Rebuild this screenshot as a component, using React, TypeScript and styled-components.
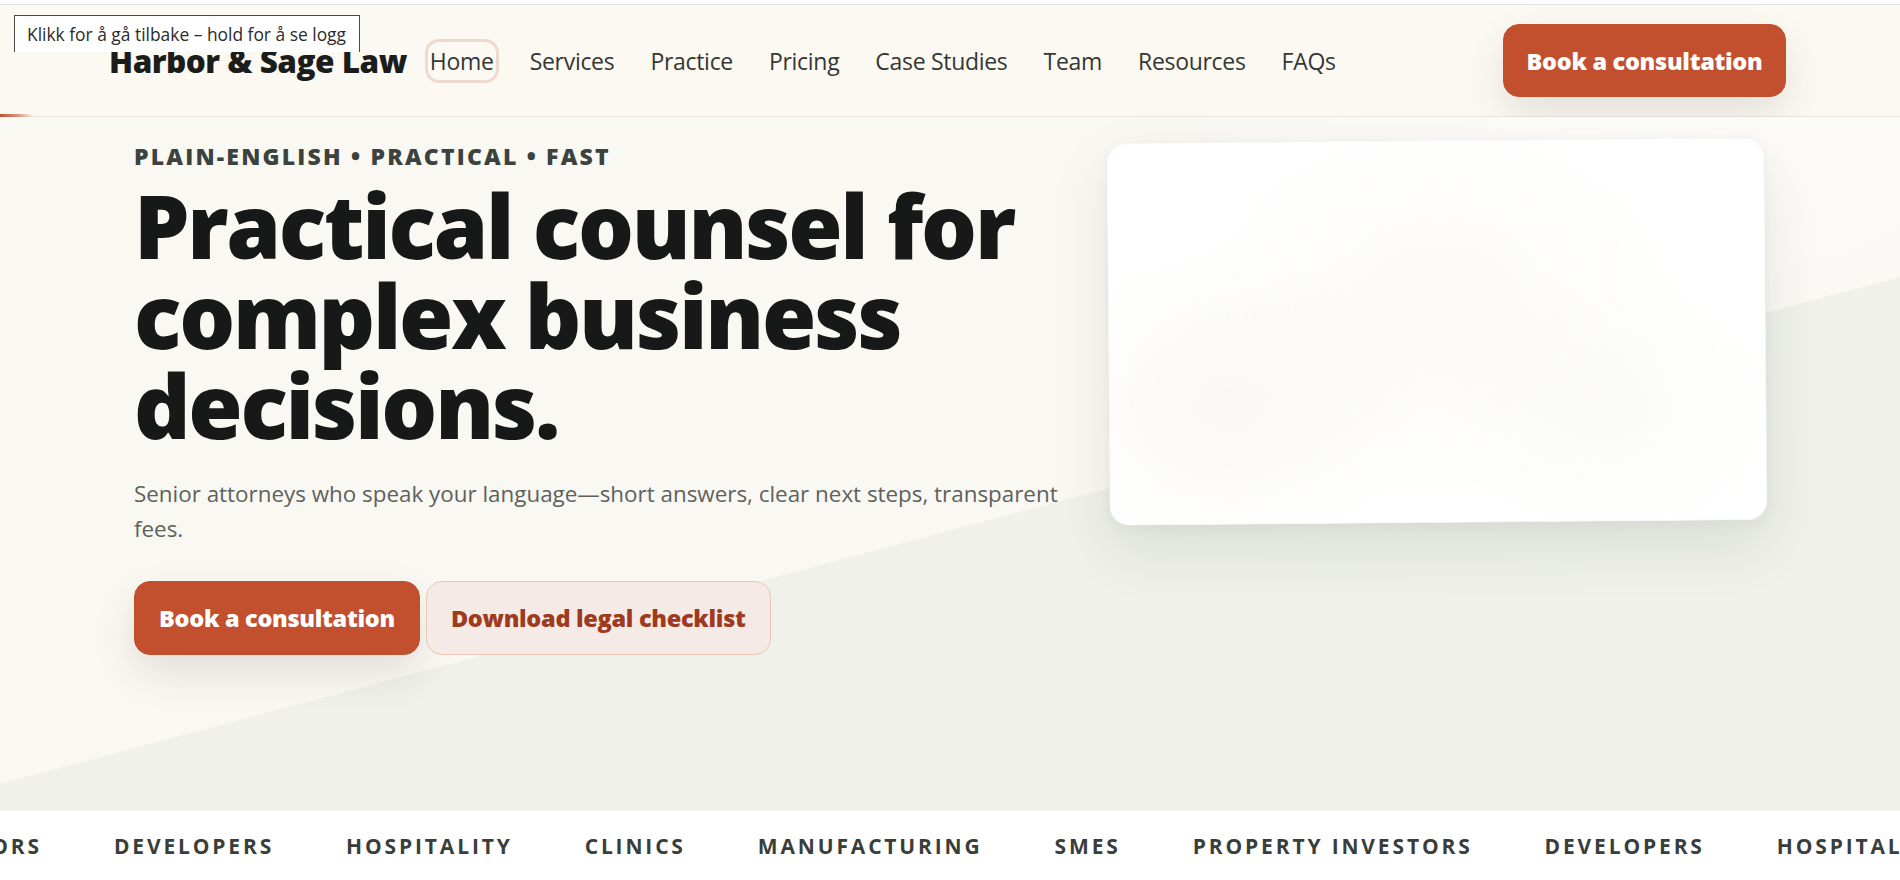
import React from 'react';
import styled, { createGlobalStyle } from 'styled-components';

const GlobalStyle = createGlobalStyle`
  * { box-sizing: border-box; }
  body {
    margin: 0;
    background: #ffffff;
    font-family: "Open Sans", "Noto Sans", Arial, sans-serif;
    color: #1b1d1b;
  }
`;

const colors = {
  brand: '#c2502e',
  brandText: '#9e3a20',
  ink: '#161917',
  muted: '#5d625d',
  cream: '#faf8f3',
  sage: '#eff1ea',
};

const TopRule = styled.div`
  height: 5px;
  background: #ffffff;
  border-bottom: 1px solid #e2e2e2;
`;

const Header = styled.header`
  position: relative;
  display: flex;
  align-items: center;
  height: 112px;
  padding: 0 114px 0 109px;
  background: #fcf9f3;
  border-bottom: 1px solid #ebe7e0;
`;

const ScrollProgress = styled.div`
  position: absolute;
  left: 0;
  bottom: -1px;
  width: 34px;
  height: 3px;
  background: linear-gradient(90deg, ${colors.brand} 0%, rgba(194, 80, 46, 0.55) 55%, rgba(194, 80, 46, 0) 100%);
`;

const Logo = styled.a`
  font-size: 31.5px;
  font-weight: 800;
  letter-spacing: -0.5px;
  color: #1b1d1b;
  text-decoration: none;
  white-space: nowrap;
`;

const Nav = styled.nav`
  display: flex;
  align-items: center;
  gap: 26px;
  margin-left: 18px;
`;

const NavLink = styled.a<{ $active?: boolean }>`
  padding: 4px 2px;
  border: 3px solid ${p => (p.$active ? '#f0d9cf' : 'transparent')};
  border-radius: 14px;
  font-size: 23px;
  line-height: 30px;
  letter-spacing: -0.3px;
  color: #343734;
  text-decoration: none;
  white-space: nowrap;
`;

const Button = styled.a<{ $variant?: 'primary' | 'soft' }>`
  display: inline-flex;
  align-items: center;
  justify-content: center;
  height: 74px;
  padding: 0 24px;
  border-radius: 16px;
  font-size: 23.5px;
  font-weight: 800;
  letter-spacing: -0.3px;
  text-decoration: none;
  white-space: nowrap;

  ${p => p.$variant === 'soft' ? `
    background: #f6eae6;
    color: ${colors.brandText};
    border: 1px solid #ebc6b9;
  ` : `
    background: ${colors.brand};
    color: #ffffff;
    border: 1px solid ${colors.brand};
    box-shadow: 0 18px 40px rgba(60, 50, 40, 0.12);
  `}
`;

const HeaderCta = styled(Button)`
  margin-left: auto;
  height: 73px;
  width: 283px;
`;

const Tooltip = styled.div`
  position: absolute;
  top: 10px;
  left: 14px;
  width: 346px;
  height: 37px;
  padding: 0 12px;
  display: flex;
  align-items: center;
  background: #ffffff;
  border: 1px solid #4a4a4a;
  border-bottom: none;
  font-size: 17.4px;
  color: #2b2b2b;
  white-space: nowrap;
  z-index: 10;
`;

const Hero = styled.section`
  position: relative;
  height: 694px;
  overflow: hidden;
  background:
    radial-gradient(ellipse 500px 260px at 1650px 0px, rgba(255, 255, 255, 0.6), rgba(255, 255, 255, 0)),
    ${colors.cream};

  &::before {
    content: '';
    position: absolute;
    inset: 0;
    background: ${colors.sage};
    clip-path: polygon(0 667px, 100% 160px, 100% 100%, 0 100%);
  }
`;

const HeroInner = styled.div`
  position: relative;
  z-index: 1;
  width: 1632px;
  margin: 0 auto;
  padding-top: 23px;
  display: grid;
  grid-template-columns: 1fr 658px;
  gap: 40px;
  align-items: start;
`;

const Copy = styled.div`
  display: flex;
  flex-direction: column;
  align-items: flex-start;
`;

const Eyebrow = styled.p`
  margin: 0;
  font-size: 23px;
  line-height: 32px;
  font-weight: 800;
  letter-spacing: 2.2px;
  color: #3c423d;
  text-transform: uppercase;
`;

const Title = styled.h1`
  margin: 8px 0 0;
  font-size: 88px;
  line-height: 90px;
  font-weight: 800;
  letter-spacing: -2.3px;
  color: ${colors.ink};
`;

const Lede = styled.p`
  margin: 26px 0 0;
  font-size: 22.4px;
  line-height: 35px;
  color: ${colors.muted};
  max-width: 934px;
`;

const Actions = styled.div`
  display: flex;
  gap: 6px;
  margin-top: 35px;
`;

const HeroCard = styled.div`
  height: 383px;
  border-radius: 20px;
  border: 1px solid rgba(0, 0, 0, 0.04);
  background:
    radial-gradient(ellipse 260px 200px at 330px 170px, rgba(250, 249, 245, 0.9), rgba(255, 255, 255, 0)),
    radial-gradient(ellipse 200px 160px at 120px 260px, rgba(248, 247, 242, 0.9), rgba(255, 255, 255, 0)),
    radial-gradient(ellipse 180px 140px at 500px 270px, rgba(250, 250, 247, 0.9), rgba(255, 255, 255, 0)),
    #ffffff;
  box-shadow: 0 24px 60px rgba(40, 45, 35, 0.1), 0 4px 12px rgba(40, 45, 35, 0.04);
  transform: rotate(-0.5deg);
`;

const Marquee = styled.div`
  height: 70px;
  background: #ffffff;
  overflow: hidden;
  display: flex;
  align-items: center;
`;

const MarqueeTrack = styled.div<{ $offset: number }>`
  display: flex;
  gap: 72px;
  transform: translateX(${p => p.$offset}px);
`;

const Sector = styled.span`
  font-size: 21px;
  font-weight: 700;
  letter-spacing: 2.85px;
  color: #3a3e3a;
  text-transform: uppercase;
  white-space: nowrap;
`;

const navItems = ['Home', 'Services', 'Practice', 'Pricing', 'Case Studies', 'Team', 'Resources', 'FAQs'];
const sectors = ['Property investors', 'Developers', 'Hospitality', 'Clinics', 'Manufacturing', 'SMEs'];

const App: React.FC = () => {
  const track = [...sectors, ...sectors, ...sectors];

  return (
    <>
      <GlobalStyle />
      <TopRule />
      <Header>
        <Tooltip>Klikk for å gå tilbake – hold for å se logg</Tooltip>
        <Logo href="#">Harbor &amp; Sage Law</Logo>
        <Nav>
          {navItems.map((item, i) => (
            <NavLink key={item} href="#" $active={i === 0}>
              {item}
            </NavLink>
          ))}
        </Nav>
        <HeaderCta href="#">Book a consultation</HeaderCta>
        <ScrollProgress />
      </Header>

      <Hero>
        <HeroInner>
          <Copy>
            <Eyebrow>Plain-English • Practical • Fast</Eyebrow>
            <Title>
              Practical counsel for
              <br />
              complex business
              <br />
              decisions.
            </Title>
            <Lede>
              Senior attorneys who speak your language—short answers, clear next steps, transparent fees.
            </Lede>
            <Actions>
              <Button href="#">Book a consultation</Button>
              <Button href="#" $variant="soft">Download legal checklist</Button>
            </Actions>
          </Copy>
          <HeroCard />
        </HeroInner>
      </Hero>

      <Marquee>
        <MarqueeTrack $offset={-238}>
          {track.map((s, i) => (
            <Sector key={i}>{s}</Sector>
          ))}
        </MarqueeTrack>
      </Marquee>
    </>
  );
};

export default App;
